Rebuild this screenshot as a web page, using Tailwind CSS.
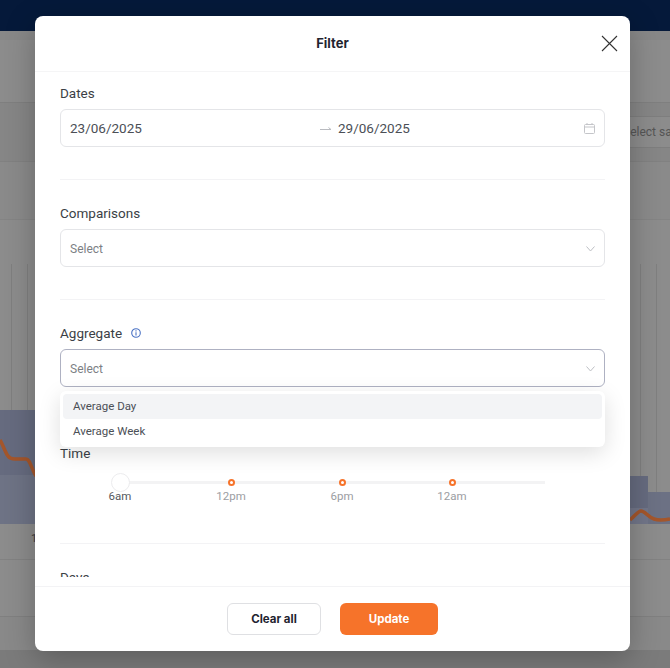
<!DOCTYPE html>
<html lang="en">
<head>
    <meta charset="UTF-8">
    <meta name="viewport" content="width=device-width, initial-scale=1.0">
    <title>Filter</title>
    <script src="https://cdn.jsdelivr.net/npm/@tailwindcss/browser@4"></script>
</head>
<body class="relative w-[670px] h-[668px] overflow-hidden bg-[#8c8c8c] font-['Roboto',sans-serif]">
    <!-- page behind the overlay -->
    <div class="flex flex-col h-[668px]">
        <div class="h-[31px] bg-[#05193a]"></div>
        <div class="h-[9px] bg-[#888888]"></div>
        <div class="h-[63px] bg-[#8c8c8c] border-b border-[#7f7f7f]"></div>
        <div class="h-[59px] bg-[#868686] border-b border-[#818181] flex justify-end pt-[13px]">
            <div class="w-[60px] h-[32px] border-y border-[#7e7e7e] bg-[#8c8c8c] text-[12px] leading-[30px] text-[#555555] overflow-hidden whitespace-nowrap pl-[13px]">Select saved</div>
        </div>
        <div class="h-[58px] bg-[#8a8a8a] border-b border-[#848484]"></div>
        <svg class="block h-[304px] w-[670px]" viewBox="0 0 670 304" fill="none">
            <path d="M11.5 44V304M27.5 44V304M640.5 44V304M656.5 44V304" stroke="#7f7f7f"/>
            <rect x="0" y="190" width="36" height="114" fill="#6e7385"/>
            <rect x="0" y="190" width="36" height="65" fill="#666b7f"/>
            <rect x="630" y="256" width="18" height="48" fill="#666b7f"/>
            <rect x="630" y="288" width="18" height="16" fill="#727689"/>
            <rect x="648" y="272" width="22" height="32" fill="#6c7184"/>
            <path d="M0 220C3 225 5 232 8 236C10 239 12 239 15 239H26C30 239 31 248 36 256" stroke="#a4562b" stroke-width="3.5"/>
            <path d="M630 300C635 296 638 291 641 291C645 291 648 297 654 299C660 301 665 300 670 299" stroke="#a4562b" stroke-width="3.5"/>
        </svg>
        <div class="h-[36px] bg-[#8c8c8c] border-b border-[#828282] pt-[7px] pl-[31px] text-[11px] text-[#3a3a3a]">1</div>
        <div class="h-[57px] bg-[#8c8c8c] border-b border-[#808080]"></div>
        <div class="h-[33px] bg-[#898989]"></div>
        <div class="flex-1 bg-[#7b7b7b]"></div>
    </div>

    <!-- filter modal -->
    <div class="absolute left-[35px] top-[16px] w-[595px] h-[635px] flex flex-col bg-white rounded-lg shadow-[0_8px_30px_rgba(0,0,0,0.25)]">
        <div class="relative h-[56px] shrink-0 flex items-center justify-center border-b border-[#f5f5f6]">
            <h1 class="font-['Inter',sans-serif] text-[13px] font-bold text-[#1f2430]">Filter</h1>
            <svg class="absolute right-[12px] top-[19px] w-[17px] h-[17px]" viewBox="0 0 17 17" fill="none" stroke="#333333" stroke-width="1.1">
                <path d="M1 1L16 16M16 1L1 16"/>
            </svg>
        </div>

        <div class="relative h-[505px] shrink-0 overflow-hidden px-[25px] pt-[11px] text-[13.5px] text-[#3b3f46]">
            <div class="h-[20px] leading-[20px]">Dates</div>
            <div class="mt-[6px] h-[38px] flex items-center border border-[#e4e5e8] rounded-md pt-[1px] pl-[9px] pr-[9px] text-[#4b4f56]">
                <span class="w-[250px]">23/06/2025</span>
                <svg class="w-[12px] h-[8px] mr-[6px] mt-[1px]" viewBox="0 0 12 8" fill="none" stroke="#b9bbc0" stroke-width="1">
                    <path d="M0 4.5H11M8.5 2.5L11 4.5"/>
                </svg>
                <span>29/06/2025</span>
                <svg class="ml-auto w-[11px] h-[11px]" viewBox="0 0 11 11" fill="none" stroke="#c4c5c9" stroke-width="1">
                    <rect x="0.5" y="1.5" width="10" height="9" rx="1"/>
                    <path d="M0.5 4H10.5M3 0V2M8 0V2"/>
                </svg>
            </div>
            <div class="mt-[32px] border-t border-[#f3f3f5]"></div>

            <div class="mt-[23px] h-[20px] leading-[20px]">Comparisons</div>
            <div class="mt-[6px] h-[38px] flex items-center justify-between border border-[#e4e5e8] rounded-md pt-[1px] pl-[9px] pr-[9px] text-[12px] text-[#7c7f85]">
                <span>Select</span>
                <svg class="w-[9px] h-[6px]" viewBox="0 0 9 6" fill="none" stroke="#bdbfc4" stroke-width="1">
                    <path d="M0.5 0.5L4.5 5L8.5 0.5"/>
                </svg>
            </div>
            <div class="mt-[32px] border-t border-[#f3f3f5]"></div>

            <div class="mt-[23px] h-[20px] leading-[20px] flex items-center">
                Aggregate
                <svg class="ml-[9px] w-[10px] h-[10px]" viewBox="0 0 10 10" fill="none" stroke="#4a72c4" stroke-width="1.1">
                    <circle cx="5" cy="5" r="4.3"/>
                    <path d="M5 4.3V7.6M5 2.2V3.4"/>
                </svg>
            </div>
            <div class="mt-[6px] h-[38px] flex items-center justify-between border border-[#aeb1c2] rounded-md pt-[1px] pl-[9px] pr-[9px] text-[12px] text-[#7c7f85]">
                <span>Select</span>
                <svg class="w-[9px] h-[6px]" viewBox="0 0 9 6" fill="none" stroke="#bdbfc4" stroke-width="1">
                    <path d="M0.5 0.5L4.5 5L8.5 0.5"/>
                </svg>
            </div>

            <div class="mt-[56px] h-[20px] leading-[20px]">Time</div>
            <div class="relative ml-[60px] mt-[10px] h-[35px]">
                <div class="absolute left-0 top-[8px] w-[425px] h-[3px] bg-[#f3f3f4]"></div>
                <div class="relative grid grid-cols-[111px_111px_110px_93px] text-[11.5px] text-[#9b9da2]">
                    <div class="w-0 flex flex-col items-center whitespace-nowrap">
                        <div class="w-[19px] h-[19px] shrink-0 rounded-full bg-white border border-[#ececee]"></div>
                        <span class="-mt-1 leading-[16px] text-[#55585e]">6am</span>
                    </div>
                    <div class="w-0 flex flex-col items-center whitespace-nowrap">
                        <div class="h-[19px] flex items-center"><div class="w-[7px] h-[7px] shrink-0 rounded-full bg-white border-2 border-[#f6732a]"></div></div>
                        <span class="-mt-1 leading-[16px]">12pm</span>
                    </div>
                    <div class="w-0 flex flex-col items-center whitespace-nowrap">
                        <div class="h-[19px] flex items-center"><div class="w-[7px] h-[7px] shrink-0 rounded-full bg-white border-2 border-[#f6732a]"></div></div>
                        <span class="-mt-1 leading-[16px]">6pm</span>
                    </div>
                    <div class="w-0 flex flex-col items-center whitespace-nowrap">
                        <div class="h-[19px] flex items-center"><div class="w-[7px] h-[7px] shrink-0 rounded-full bg-white border-2 border-[#f6732a]"></div></div>
                        <span class="-mt-1 leading-[16px]">12am</span>
                    </div>
                </div>
            </div>
            <div class="mt-[35px] border-t border-[#f3f3f5]"></div>

            <div class="mt-[23px] h-[20px] leading-[20px]">Days</div>

            <!-- open dropdown over the form -->
            <div class="absolute left-[25px] top-[319px] w-[545px] h-[56px] bg-white rounded-md p-[3px] text-[11.5px] text-[#4b4f56] shadow-[0_6px_22px_rgba(0,0,0,0.13)]">
                <div class="h-[25px] flex items-center pl-[10px] rounded bg-[#f3f4f6]">Average Day</div>
                <div class="h-[25px] flex items-center pl-[10px]">Average Week</div>
            </div>
        </div>

        <div class="flex-1 mt-[9px] border-t border-[#f3f3f5] flex justify-center gap-[19px] pt-[16px]">
            <button class="w-[94px] h-[32px] pt-[1px] rounded-md bg-white border border-[#dfe0e3] font-['Inter',sans-serif] text-[11.5px] font-bold text-[#1f2430]">Clear all</button>
            <button class="w-[98px] h-[32px] pt-[1px] rounded-md bg-[#f6732a] font-['Inter',sans-serif] text-[11.5px] font-bold text-white">Update</button>
        </div>
    </div>
</body>
</html>
